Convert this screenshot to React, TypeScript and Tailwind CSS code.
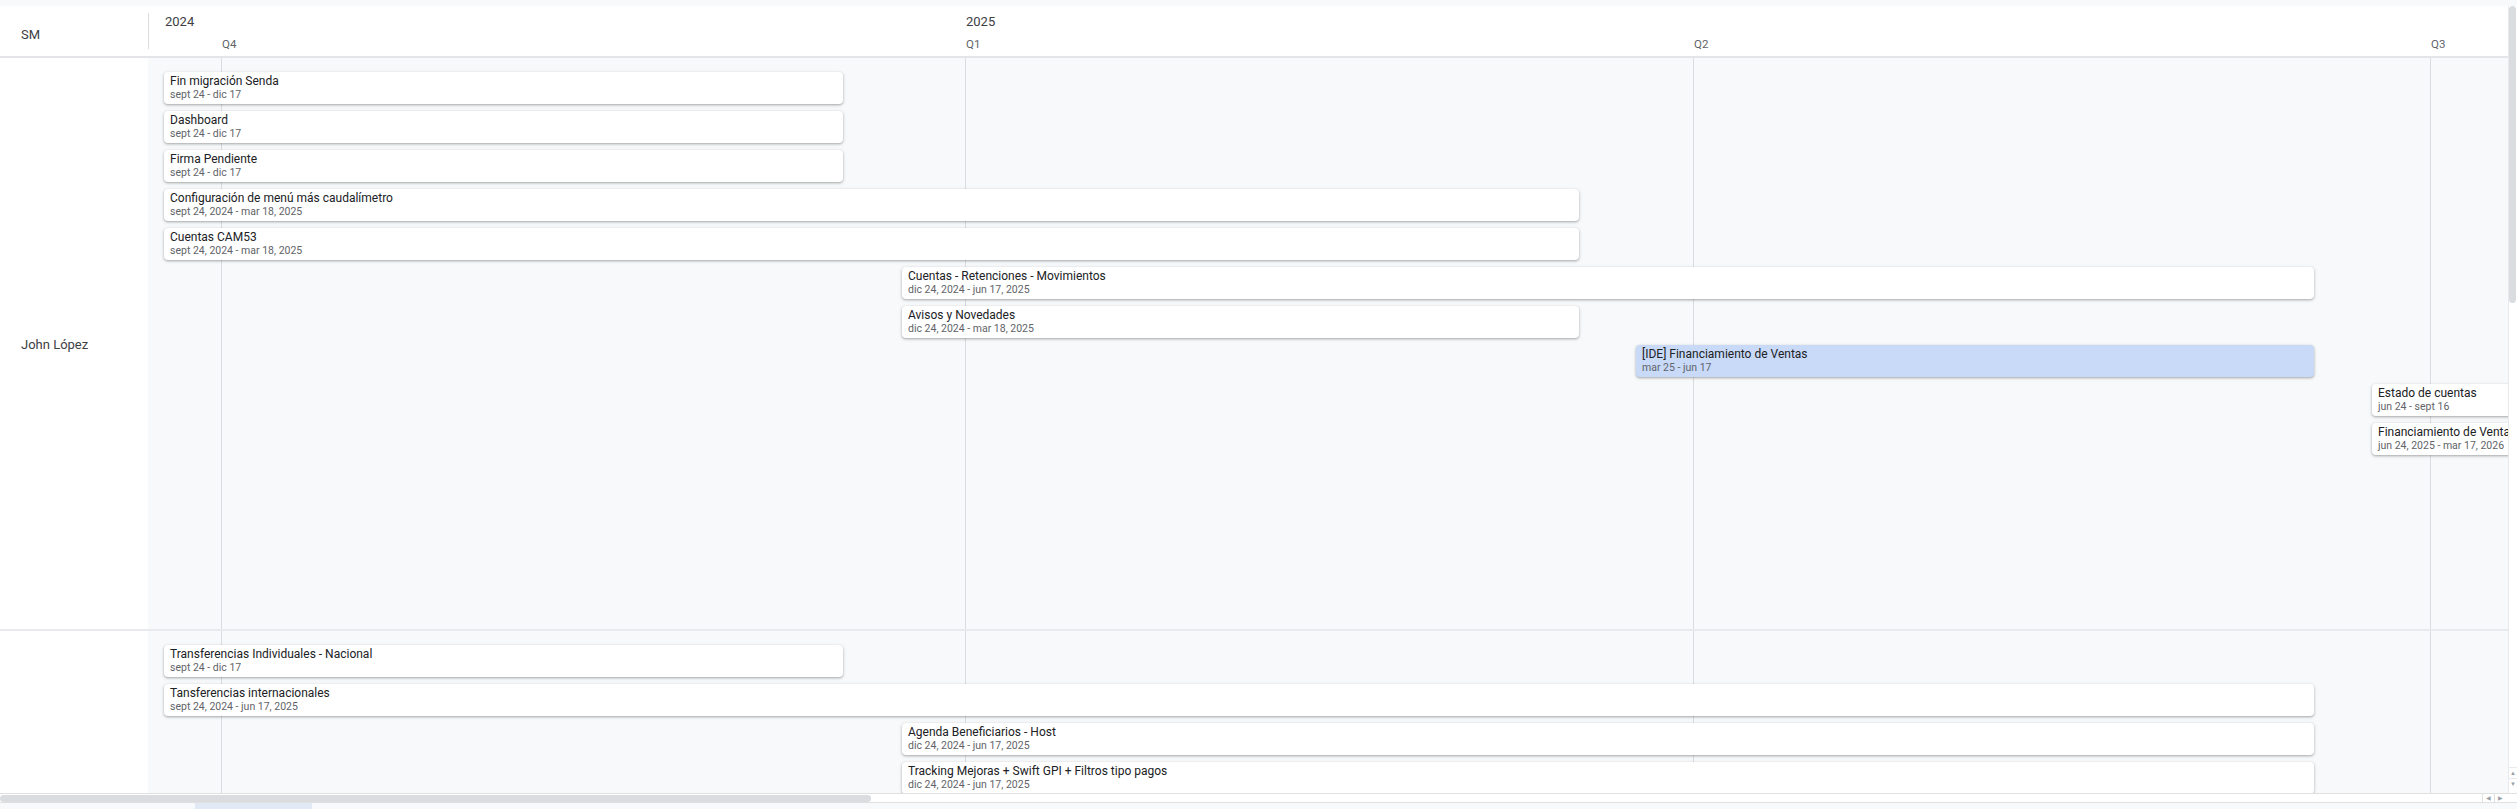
type Bar = {
  title: string
  dates: string
  left: number
  width: number
  blue?: boolean
}

// x positions are page pixels, timeline body starts at 148
const TL = 148
const quarters = [
  { label: "Q4", x: 221 },
  { label: "Q1", x: 965 },
  { label: "Q2", x: 1693 },
  { label: "Q3", x: 2430 },
]

const years = [
  { label: "2024", x: TL, pad: 17 },
  { label: "2025", x: 965, pad: 1 },
]

const groupOne: Bar[] = [
  { title: "Fin migración Senda", dates: "sept 24 - dic 17", left: 164, width: 679 },
  { title: "Dashboard", dates: "sept 24 - dic 17", left: 164, width: 679 },
  { title: "Firma Pendiente", dates: "sept 24 - dic 17", left: 164, width: 679 },
  { title: "Configuración de menú más caudalímetro", dates: "sept 24, 2024 - mar 18, 2025", left: 164, width: 1415 },
  { title: "Cuentas CAM53", dates: "sept 24, 2024 - mar 18, 2025", left: 164, width: 1415 },
  { title: "Cuentas - Retenciones - Movimientos", dates: "dic 24, 2024 - jun 17, 2025", left: 902, width: 1412 },
  { title: "Avisos y Novedades", dates: "dic 24, 2024 - mar 18, 2025", left: 902, width: 677 },
  { title: "[IDE] Financiamiento de Ventas", dates: "mar 25 - jun 17", left: 1636, width: 678, blue: true },
  { title: "Estado de cuentas", dates: "jun 24 - sept 16", left: 2372, width: 679 },
  { title: "Financiamiento de Ventas", dates: "jun 24, 2025 - mar 17, 2026", left: 2372, width: 2150 },
]

const groupTwo: Bar[] = [
  { title: "Transferencias Individuales - Nacional", dates: "sept 24 - dic 17", left: 164, width: 679 },
  { title: "Tansferencias internacionales", dates: "sept 24, 2024 - jun 17, 2025", left: 164, width: 2150 },
  { title: "Agenda Beneficiarios - Host", dates: "dic 24, 2024 - jun 17, 2025", left: 902, width: 1412 },
  { title: "Tracking Mejoras + Swift GPI + Filtros tipo pagos", dates: "dic 24, 2024 - jun 17, 2025", left: 902, width: 1412 },
]

const qWidth = (i: number) => (quarters[i + 1]?.x ?? quarters[i].x + 736) - quarters[i].x

const Grid = () => (
  <div className="absolute inset-0 flex">
    <div className="shrink-0" style={{ width: quarters[0].x - TL }} />
    {quarters.map((q, i) => (
      <div key={i} className="shrink-0 border-l border-[#dadce0]" style={{ width: qWidth(i) }} />
    ))}
  </div>
)

const Card = ({ bar }: { bar: Bar }) => (
  <div
    className={`h-[32px] shrink-0 overflow-hidden whitespace-nowrap rounded-[4px] px-[6px] pt-[2px] shadow-[0_1px_2px_0_rgba(60,64,67,0.3),0_1px_3px_1px_rgba(60,64,67,0.12)] ${bar.blue ? "bg-[#c8daf8]" : "bg-white"}`}
    style={{ marginLeft: bar.left - TL, width: bar.width }}
  >
    <div className="text-[12px] leading-[14px] text-[#202124]">{bar.title}</div>
    <div className="text-[10.5px] leading-[14px] text-[#5f6368]">{bar.dates}</div>
  </div>
)

const Group = ({ name, bars }: { name: string; bars: Bar[] }) => (
  <div className="flex h-[573px] shrink-0 border-b-2 border-[#e8eaed]">
    <div className="flex w-[148px] shrink-0 items-center bg-white pl-[21px] pt-[2px] text-[13px] text-[#3c4043]">
      {name}
    </div>
    <div className="relative flex-1 bg-[#f8f9fa]">
      <Grid />
      <div className="relative flex flex-col gap-[7px] pt-[14px]">
        {bars.map((b, i) => (
          <Card key={i} bar={b} />
        ))}
      </div>
    </div>
  </div>
)

const Header = () => (
  <div className="flex h-[52px] shrink-0 border-b-2 border-[#e3e5e8] bg-white">
    <div className="flex w-[149px] shrink-0 items-center justify-between">
      <span className="pl-[21px] pt-[8px] text-[13px] text-[#3c4043]">SM</span>
      <div className="h-[36px] w-px bg-[#dadce0]" />
    </div>
    <div className="flex flex-1 flex-col overflow-hidden whitespace-nowrap">
      <div className="mt-[7px] flex h-[18px]">
        {years.map((y, i) => (
          <div
            key={y.label}
            className="shrink-0 text-[13px] leading-[18px] text-[#3c4043]"
            style={{ width: (years[i + 1]?.x ?? y.x + 700) - (i === 0 ? TL + 1 : y.x), paddingLeft: y.pad - (i === 0 ? 1 : 0) }}
          >
            {y.label}
          </div>
        ))}
      </div>
      <div className="mt-[6px] flex h-[14px]">
        <div className="shrink-0" style={{ width: quarters[0].x - TL - 1 }} />
        {quarters.map((q, i) => (
          <div
            key={i}
            className="shrink-0 pl-[1px] text-[11.5px] leading-[14px] text-[#5f6368]"
            style={{ width: Math.min(qWidth(i), 60) + (i < quarters.length - 1 ? qWidth(i) - Math.min(qWidth(i), 60) : 0) }}
          >
            {q.label}
          </div>
        ))}
      </div>
    </div>
  </div>
)

const App = () => {
  return (
    <div className="flex h-[809px] w-[2517px] flex-col overflow-hidden bg-[#f8f9fa] [font-family:Roboto,sans-serif]">
      <div className="h-[6px] shrink-0" />
      <div className="flex h-[787px] shrink-0">
        <div className="flex min-w-0 flex-1 flex-col overflow-hidden bg-white">
          <Header />
          <Group name="John López" bars={groupOne} />
          <Group name="" bars={groupTwo} />
        </div>
        {/* vertical scrollbar */}
        <div className="flex w-[9px] shrink-0 flex-col border-l border-[#e8eaed] bg-white">
          <div className="h-[297px] w-[7px] rounded-full bg-[#dadce0]" />
          <div className="flex-1" />
          <div className="flex h-[11px] items-center justify-center border-t border-[#e8eaed] text-[6px] leading-none text-[#9aa0a6]">▲</div>
          <div className="mb-[4px] flex h-[11px] items-center justify-center border-t border-[#e8eaed] text-[6px] leading-none text-[#9aa0a6]">▼</div>
        </div>
      </div>
      {/* horizontal scrollbar */}
      <div className="flex h-[10px] shrink-0 items-center border-y border-[#e0e0e0] bg-white">
        <div className="h-[7px] w-[871px] rounded-full bg-[#dadce0]" />
        <div className="flex-1" />
        <div className="flex h-full w-[12px] items-center justify-center border-l border-[#e0e0e0] text-[6px] leading-none text-[#9aa0a6]">◀</div>
        <div className="flex h-full w-[12px] items-center justify-center border-l border-[#e0e0e0] text-[6px] leading-none text-[#9aa0a6]">▶</div>
        <div className="w-[11px]" />
      </div>
      <div className="flex h-[6px] shrink-0">
        <div className="ml-[195px] w-[117px] bg-[#e1e9f7]" />
      </div>
    </div>
  )
}

export default App
